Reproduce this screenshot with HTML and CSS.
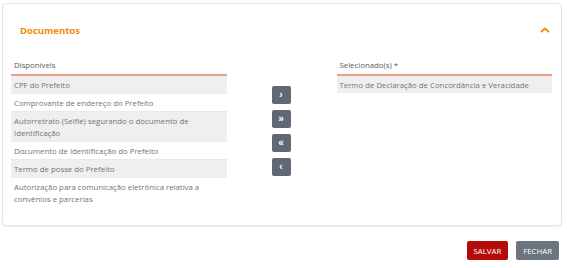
FILE: index.html
```html
<!DOCTYPE html>
<html lang="pt-BR">
<head>
    <meta charset="UTF-8">
    <title>Documentos</title>
    <link rel="stylesheet" href="styles.css">
</head>
<body>
    <div class="card">
        <div class="card-head">
            <span class="title">Documentos</span>
            <svg class="chevron" width="10" height="6" viewBox="0 0 10 6">
                <path d="M1 5 L5 1.5 L9 5" fill="none" stroke="#f08a0c" stroke-width="1.8"/>
            </svg>
        </div>

        <div class="picker">
            <div class="list">
                <div class="list-label">Disponíveis</div>
                <div class="item">CPF do Prefeito</div>
                <div class="item">Comprovante de endereço do Prefeito</div>
                <div class="item">Autorretrato (Selfie) segurando o documento de Identificação</div>
                <div class="item">Documento de Identificação do Prefeito</div>
                <div class="item">Termo de posse do Prefeito</div>
                <div class="item">Autorização para comunicação eletrônica relativa a convênios e parcerias</div>
            </div>

            <div class="moves">
                <button class="move">&rsaquo;</button>
                <button class="move">&raquo;</button>
                <button class="move">&laquo;</button>
                <button class="move">&lsaquo;</button>
            </div>

            <div class="list">
                <div class="list-label">Selecionado(s) *</div>
                <div class="item">Termo de Declaração de Concordância e Veracidade</div>
            </div>
        </div>
    </div>

    <div class="actions">
        <button class="btn save">SALVAR</button>
        <button class="btn close">FECHAR</button>
    </div>
</body>
</html>
```

FILE: styles.css
```css
* {
    margin: 0;
    padding: 0;
    box-sizing: border-box;
}
body {
    font-family: "Open Sans", "Liberation Sans", sans-serif;
    background-color: #fff;
    padding: 3px 5px 0 2px;
}
.card {
    width: 560px;
    height: 223px;
    border: 1px solid #e4e4e4;
    border-radius: 4px;
    box-shadow: 0 1px 2px rgba(0, 0, 0, 0.06);
    padding: 0 9px 0 8px;
}
.card-head {
    display: flex;
    justify-content: space-between;
    align-items: center;
    height: 52px;
    padding: 0 0 0 9px;
}
.title {
    color: #f08a0c;
    font-weight: bold;
    font-size: 9.5px;
}
.chevron {
    margin-right: 2px;
}
.picker {
    display: flex;
    align-items: flex-start;
}
.list {
    width: 217px;
}
.list-label {
    font-size: 7.8px;
    color: #5a5a5a;
    height: 20px;
    padding: 4px 3px 0;
    border-bottom: 2px solid #eca088;
}
.item {
    font-size: 7.8px;
    color: #747474;
    line-height: 12px;
    padding: 3px 3px 2px;
    border-bottom: 1px solid #e9e9e9;
}
.item:last-child {
    border-bottom: none;
}
.item:nth-child(even) {
    background-color: #efefef;
}
.moves {
    display: flex;
    flex-direction: column;
    gap: 6px;
    margin: 30px 46px 0 45px;
}
.move {
    width: 19px;
    height: 18px;
    border: none;
    border-radius: 2px;
    background-color: #5f6873;
    color: #fff;
    font-weight: bold;
    font-size: 10px;
    line-height: 16px;
}
.actions {
    display: flex;
    justify-content: flex-end;
    gap: 8px;
    margin: 15px 3px 0 0;
}
.btn {
    height: 19px;
    padding: 0 7px;
    border: none;
    border-radius: 2px;
    color: #fff;
    font-family: "Open Sans", "Liberation Sans", sans-serif;
    font-size: 7.8px;
}
.save {
    background-color: #b50a0a;
}
.close {
    background-color: #6c757d;
}
```
